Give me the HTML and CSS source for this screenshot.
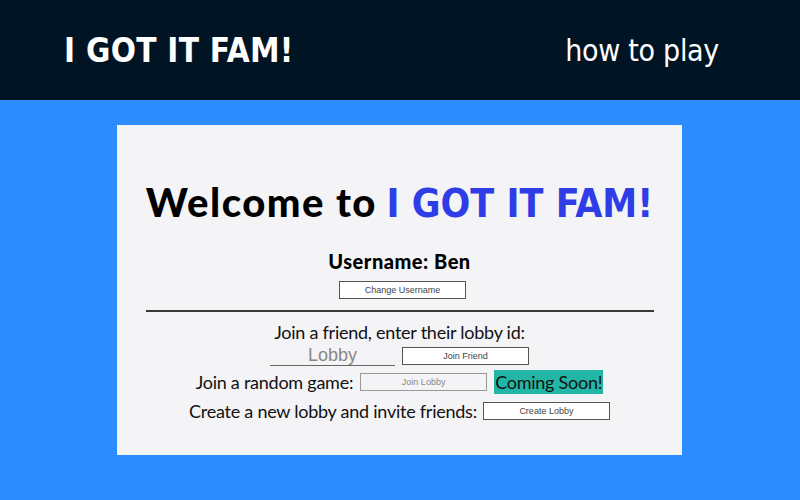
FILE: index.html
```html
<!DOCTYPE html>
<html lang="en">
<head>
    <meta charset="UTF-8">
    <title>I GOT IT FAM!</title>
    <link rel="stylesheet" href="styles.css">
</head>
<body>

    <header class="topbar">
        <div class="brand">I GOT IT FAM!</div>
        <a class="nav-link" href="#">how to play</a>
    </header>

    <main class="stage">
        <div class="card">
            <h1 class="welcome"><span class="welcome-text">Welcome to</span> <span class="game-name">I GOT IT FAM!</span></h1>

            <h2 class="username">Username: Ben</h2>
            <button class="btn btn-change">Change Username</button>

            <hr class="divider">

            <div class="row">Join a friend, enter their lobby id:</div>
            <div class="row">
                <input class="lobby-input" type="text" placeholder="Lobby">
                <button class="btn">Join Friend</button>
            </div>
            <div class="row row-random">
                <span>Join a random game:</span>
                <button class="btn" disabled>Join Lobby</button>
                <span class="soon">Coming Soon!</span>
            </div>
            <div class="row row-create">
                <span>Create a new lobby and invite friends:</span>
                <button class="btn">Create Lobby</button>
            </div>
        </div>
    </main>

</body>
</html>
```

FILE: styles.css
```css
/* Basis */
body {
    margin: 0;
    background-color: #2b8bff;
    font-family: Lato, "Noto Sans", sans-serif;
}

/* Kopfzeile */
.topbar {
    height: 100px;
    background-color: #011424;
    display: flex;
    align-items: center;
    justify-content: space-between;
    padding: 0 81px 0 64px;
}

.brand {
    color: white;
    font-family: "DejaVu Sans Condensed", "DejaVu Sans", sans-serif;
    font-weight: bold;
    font-size: 33px;
    letter-spacing: 0.3px;
}

.nav-link {
    color: white;
    text-decoration: none;
    font-family: "DejaVu Sans Condensed", "DejaVu Sans", sans-serif;
    font-size: 30px;
    letter-spacing: -0.3px;
}

/* Karte */
.stage {
    padding-top: 25px;
}

.card {
    width: 565px;
    height: 330px;
    margin-left: 117px;
    background-color: #f4f3f6;
    display: flex;
    flex-direction: column;
    align-items: center;
    box-sizing: border-box;
    padding-top: 52px;
}

.welcome {
    margin: 0;
    font-size: 40px;
    font-weight: 900;
    color: #000;
    line-height: 50px;
}

.welcome-text {
    letter-spacing: 1.5px;
}

.game-name {
    color: #2f3de6;
    font-family: "DejaVu Sans Condensed", "DejaVu Sans", sans-serif;
    font-weight: bold;
    font-size: 39px;
}

.username {
    margin: 21px 0 9px;
    font-size: 20px;
    font-weight: 900;
    line-height: 22px;
    letter-spacing: 0.5px;
}

.btn {
    width: 127px;
    height: 18px;
    padding: 0;
    background: white;
    border: 1px solid #555;
    font-family: "Liberation Sans", Arial, sans-serif;
    font-size: 9px;
    letter-spacing: 0;
    color: #444;
}

.btn-change {
    margin-left: 6px;
}

.btn:disabled {
    background: #f4f3f6;
    border-color: #999;
    color: #888;
}

.divider {
    width: 508px;
    margin: 11px 0 8px;
    border: none;
    border-top: 2px solid #3a3a3a;
}

.row {
    display: flex;
    align-items: center;
    gap: 7px;
    font-size: 18px;
    letter-spacing: -0.25px;
    line-height: 24px;
    height: 24px;
    color: #111;
}

.row-random {
    margin-top: 2px;
}

.row-create {
    margin-top: 5px;
    gap: 6px;
}

.lobby-input {
    width: 125px;
    height: 18px;
    line-height: 18px;
    border: none;
    border-bottom: 1px solid #666;
    background: transparent;
    font-family: "Liberation Sans", Arial, sans-serif;
    font-size: 18px;
    letter-spacing: 0;
    text-align: center;
    padding: 0;
}

.lobby-input::placeholder {
    color: #888;
}

.soon {
    background-color: #21b6a6;
    padding: 0 1px;
}
```
